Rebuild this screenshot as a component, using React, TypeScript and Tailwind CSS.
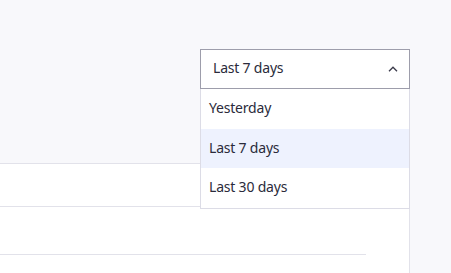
import React, { useState } from 'react';

const options = ['Yesterday', 'Last 7 days', 'Last 30 days'];

const App: React.FC = () => {
  const [selected, setSelected] = useState<string>('Last 7 days');
  const [open, setOpen] = useState<boolean>(true);

  return (
    <div className="h-[273px] w-full overflow-hidden bg-[#f8f8fb] text-[14px] tracking-[-0.2px] text-[#2b2b3b] font-['Noto_Sans',sans-serif]">
      <div className="relative pt-[49px] pl-[200px] h-[163px]">
        <div className="relative w-[210px]">
          <button
            onClick={() => setOpen(!open)}
            className="flex h-[40px] w-full items-center justify-between border border-[#9d9dab] bg-white pl-[12px] pr-[11px] pb-[3px] text-left"
          >
            <span>{selected}</span>
            <svg width="10" height="6" viewBox="0 0 10 6" fill="none" className={open ? 'mt-[2px]' : 'mt-[2px] rotate-180'}>
              <path d="M1 5.2L5 1.2L9 5.2" stroke="#3a3a4a" strokeWidth="1.3" />
            </svg>
          </button>
          {open && (
            <ul className="absolute left-0 top-[40px] z-10 w-full border-x border-b border-[#dcdce6] bg-white">
              {options.map(opt => (
                <li
                  key={opt}
                  onClick={() => { setSelected(opt); setOpen(false); }}
                  className={`flex h-[39.5px] items-center pl-[8px] pb-[2px] ${opt === selected ? 'bg-[#eef2fe]' : ''}`}
                >
                  {opt}
                </li>
              ))}
            </ul>
          )}
        </div>
      </div>

      <div className="w-[410px] h-[110px] border-t border-r border-[#e2e2ea] bg-white">
        <div className="h-[43px] border-b border-[#e2e2ea]" />
        <div className="h-[48px] w-[366px] border-b border-[#e2e2ea]" />
      </div>
    </div>
  );
};

export default App;
